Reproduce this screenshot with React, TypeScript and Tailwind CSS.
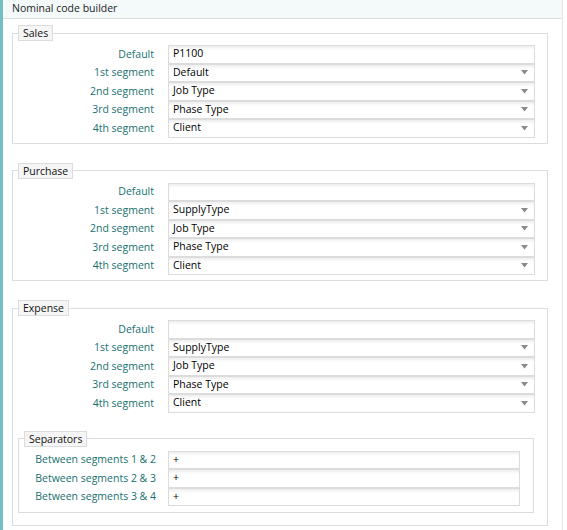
const font = { fontFamily: '"Open Sans", "DejaVu Sans", sans-serif' }

function TextBox({ value, wide = true }: { value: string; wide?: boolean }) {
  return (
    <div
      className={`flex h-[18.5px] items-center border border-[#dcdcdc] bg-white pl-[4px] text-[10.5px] text-black shadow-[inset_0_3px_3px_-1px_rgba(0,0,0,0.07)] ${wide ? "w-[367px]" : "w-[352px]"}`}
    >
      {value}
    </div>
  )
}

function SelectBox({ value }: { value: string }) {
  return (
    <div className="flex h-[18.5px] w-[367px] items-center justify-between border border-[#dcdcdc] bg-white pl-[4px] pr-[6px] text-[10.5px] text-black shadow-[inset_0_3px_3px_-1px_rgba(0,0,0,0.07)]">
      <span>{value}</span>
      <svg width="7" height="5" viewBox="0 0 7 5">
        <path d="M0 0h7L3.5 4.5z" fill="#8a8a8a" />
      </svg>
    </div>
  )
}

function Row({ label, children }: { label: string; children: React.ReactNode }) {
  return (
    <div className="flex items-center">
      <div className="w-[141px] pt-[1px] text-right text-[10.5px] text-[#17706f]">{label}</div>
      <div className="ml-[14px]">{children}</div>
    </div>
  )
}

function Legend({ title }: { title: string }) {
  return (
    <legend className="ml-[5px] border border-[#dcdcdc] bg-[#f5f5f5] px-[4px] text-[10.5px] leading-[14px] text-[#111]">
      {title}
    </legend>
  )
}

type Section = {
  title: string
  defaultValue: string
  segments: string[]
}

const sections: Section[] = [
  { title: "Sales", defaultValue: "P1100", segments: ["Default", "Job Type", "Phase Type", "Client"] },
  { title: "Purchase", defaultValue: "", segments: ["SupplyType", "Job Type", "Phase Type", "Client"] },
  { title: "Expense", defaultValue: "", segments: ["SupplyType", "Job Type", "Phase Type", "Client"] },
]

const ordinals = ["1st", "2nd", "3rd", "4th"]

export default function App() {
  return (
    <div className="flex h-[530px] w-[567px] bg-white" style={font}>
      <div className="w-[3px] shrink-0 bg-[#74bfc0]" />
      <div className="flex w-[560px] flex-col border-r border-[#e4e4e4]">
        <div className="flex h-[19px] items-center border-b border-[#dedede] bg-[#f4fafa] pl-[9px] text-[10.5px] text-[#222]">
          Nominal code builder
        </div>
        <div className="flex flex-col gap-[19px] pl-[9px] pt-[6px]">
          {sections.map((s) => (
            <fieldset
              key={s.title}
              className={`w-[536px] border border-[#dcdcdc] pt-[4px] ${s.title === "Expense" ? "pb-[12px]" : "pb-[5px]"}`}
            >
              <Legend title={s.title} />
              <div className="flex flex-col">
                <Row label="Default">
                  <TextBox value={s.defaultValue} />
                </Row>
                {s.segments.map((seg, i) => (
                  <Row key={i} label={`${ordinals[i]} segment`}>
                    <SelectBox value={seg} />
                  </Row>
                ))}
              </div>
              {s.title === "Expense" && (
                <fieldset className="ml-[5px] mt-[18px] w-[516px] border border-[#dcdcdc] pb-[6px] pt-[4px]">
                  <Legend title="Separators" />
                  <div className="flex flex-col">
                    {["1 & 2", "2 & 3", "3 & 4"].map((p) => (
                      <div key={p} className="flex items-center">
                        <div className="w-[137px] pt-[1px] text-right text-[10.5px] text-[#17706f]">
                          Between segments {p}
                        </div>
                        <div className="ml-[12px]">
                          <TextBox value="+" wide={false} />
                        </div>
                      </div>
                    ))}
                  </div>
                </fieldset>
              )}
            </fieldset>
          ))}
        </div>
      </div>
    </div>
  )
}
